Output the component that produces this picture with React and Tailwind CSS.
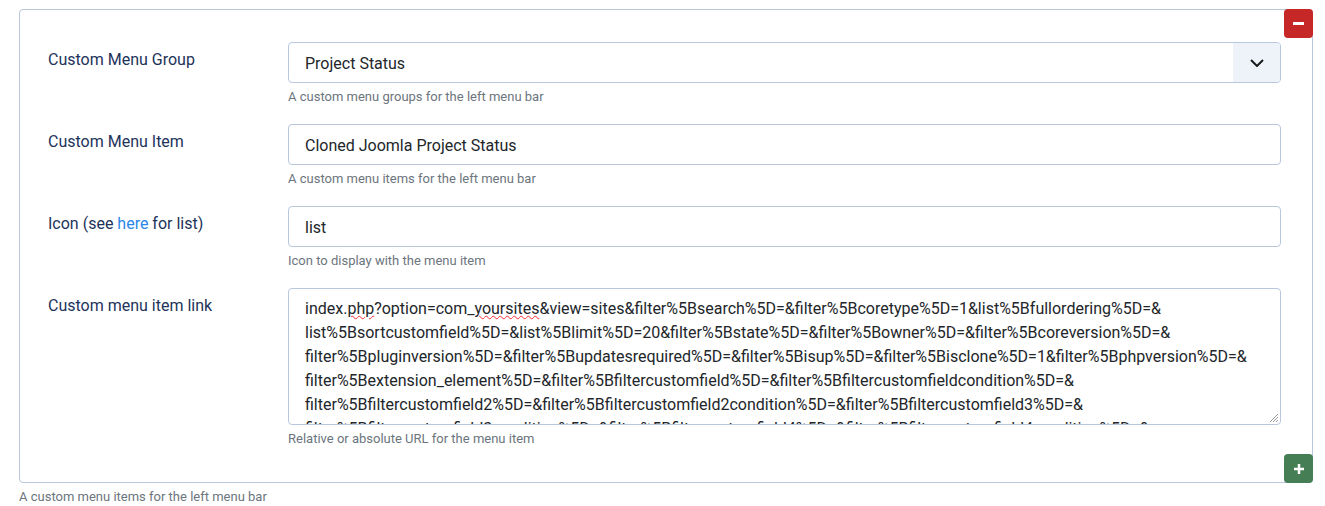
import React from 'react';

const urlLines = [
  'index.php?option=com_yoursites&view=sites&filter%5Bsearch%5D=&filter%5Bcoretype%5D=1&list%5Bfullordering%5D=&',
  'list%5Bsortcustomfield%5D=&list%5Blimit%5D=20&filter%5Bstate%5D=&filter%5Bowner%5D=&filter%5Bcoreversion%5D=&',
  'filter%5Bpluginversion%5D=&filter%5Bupdatesrequired%5D=&filter%5Bisup%5D=&filter%5Bisclone%5D=1&filter%5Bphpversion%5D=&',
  'filter%5Bextension_element%5D=&filter%5Bfiltercustomfield%5D=&filter%5Bfiltercustomfieldcondition%5D=&',
  'filter%5Bfiltercustomfield2%5D=&filter%5Bfiltercustomfield2condition%5D=&filter%5Bfiltercustomfield3%5D=&',
  'filter%5Bfiltercustomfield3condition%5D=&filter%5Bfiltercustomfield4%5D=&filter%5Bfiltercustomfield4condition%5D=&',
];

function Row({ label, help, children }) {
  return (
    <div className="flex">
      <div className="w-[240px] shrink-0 pt-[6px] text-[16px] leading-6 text-[#22335a]">{label}</div>
      <div className="flex-1">
        {children}
        <div className="mt-[5px] text-[13px] leading-[18px] text-[#6c757d]">{help}</div>
      </div>
    </div>
  );
}

const inputCls = 'h-[41px] w-full rounded-[4px] border border-[#b8c7de] bg-white px-4 pt-[2px] flex items-center text-[16px] text-[#22262a]';

export default function App() {
  return (
    <div className="bg-white pl-[19px] pr-[12px] pt-[9px] font-['Roboto',sans-serif]" style={{ height: 506 }}>
      <div className="relative rounded-[4px] border border-[#b8c7de] pl-[28px] pr-[31px] pt-[32px] pb-[34px]">
        <button className="absolute right-[-1px] top-[-1px] flex h-[29px] w-[29px] items-center justify-center rounded-[4px] bg-[#c52827]">
          <span className="block h-[3px] w-[11px] bg-white" />
        </button>
        <div className="flex flex-col gap-[18px]">
          <Row label="Custom Menu Group" help="A custom menu groups for the left menu bar">
            <div className={inputCls + ' !pr-0 !pt-0 justify-between overflow-hidden'}>
              <span className="pt-[2px]">Project Status</span>
              <span className="flex h-full w-[47px] items-center justify-center bg-[#eef3fa]">
                <svg width="14" height="8" viewBox="0 0 14 8" fill="none">
                  <path d="M1 1l6 6 6-6" stroke="#1b1b1b" strokeWidth="2" />
                </svg>
              </span>
            </div>
          </Row>
          <Row label="Custom Menu Item" help="A custom menu items for the left menu bar">
            <div className={inputCls}>Cloned Joomla Project Status</div>
          </Row>
          <Row
            label={<>Icon (see <a className="text-[#2a86ea]">here</a> for list)</>}
            help="Icon to display with the menu item"
          >
            <div className={inputCls}>list</div>
          </Row>
          <Row label="Custom menu item link" help="Relative or absolute URL for the menu item">
            <div className="relative h-[137px] w-full overflow-hidden rounded-[4px] border border-[#b8c7de] bg-white px-4 pt-[8px] text-[16px] leading-6 text-[#22262a]">
              {urlLines.map((l, i) =>
                i === 0 ? (
                  <div key={i} className="whitespace-nowrap">
                    index.<span className="underline decoration-wavy decoration-red-500 decoration-1">php</span>?option=com_<span className="underline decoration-wavy decoration-red-500 decoration-1">yoursites</span>&view=sites&filter%5Bsearch%5D=&filter%5Bcoretype%5D=1&list%5Bfullordering%5D=&
                  </div>
                ) : (
                  <div key={i} className="whitespace-nowrap">{l}</div>
                )
              )}
              <svg className="absolute bottom-[1px] right-[1px]" width="10" height="10" viewBox="0 0 10 10">
                <path d="M9 1L1 9M9 4L4 9M9 7L7 9" stroke="#9a9a9a" strokeWidth="1" />
              </svg>
            </div>
          </Row>
        </div>
        <button className="absolute right-[-1px] bottom-[-1px] flex h-[29px] w-[29px] items-center justify-center rounded-[4px] bg-[#457d54]">
          <svg width="12" height="12" viewBox="0 0 12 12">
            <path d="M6 1v10M1 6h10" stroke="white" strokeWidth="2.5" />
          </svg>
        </button>
      </div>
      <div className="mt-[5px] text-[13px] leading-[18px] text-[#6c757d]">A custom menu items for the left menu bar</div>
    </div>
  );
}
